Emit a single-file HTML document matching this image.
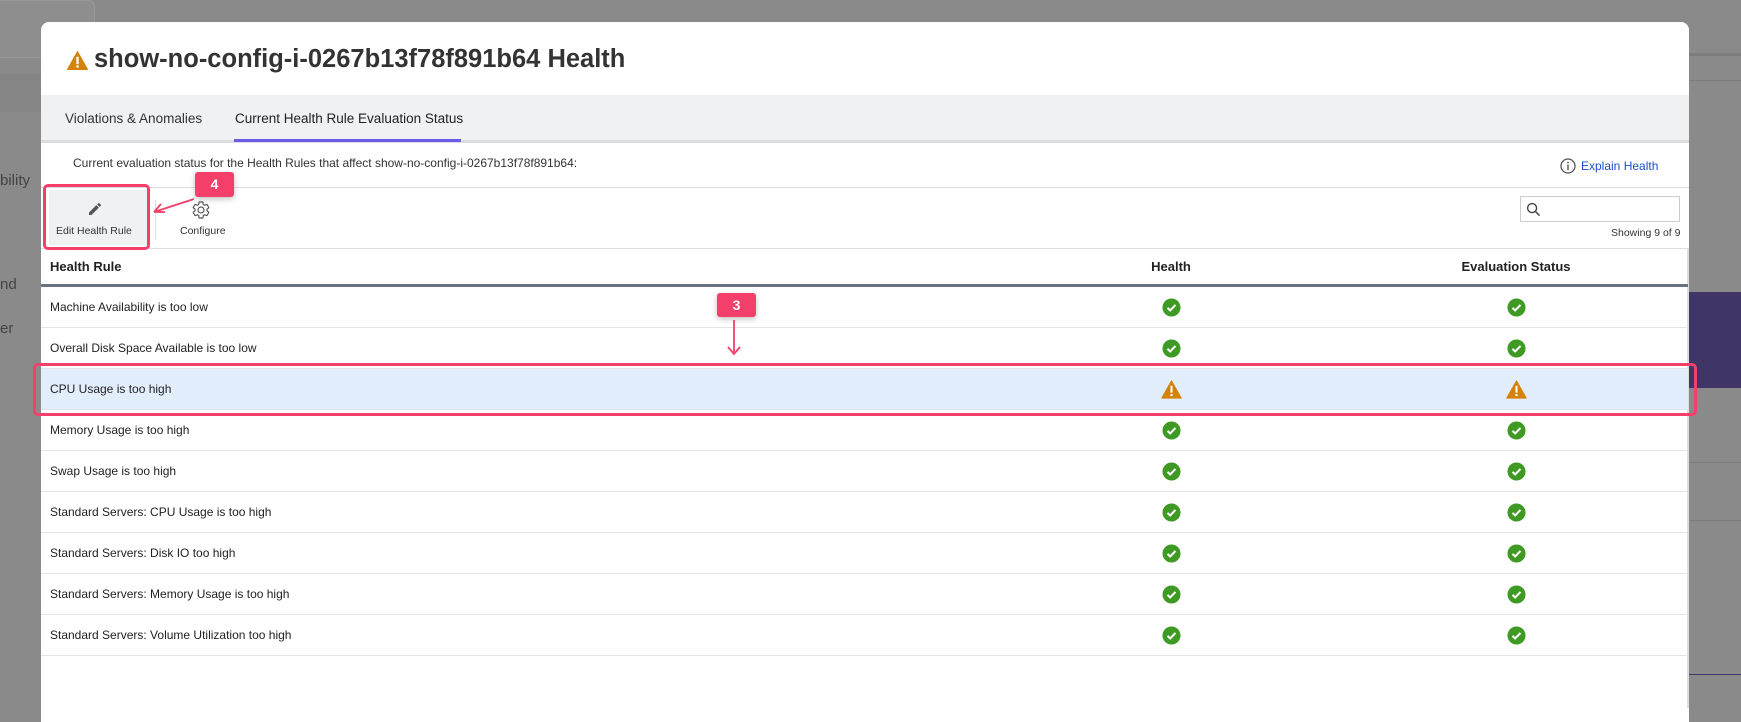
<!DOCTYPE html>
<html><head><meta charset="utf-8"><style>
*{box-sizing:border-box;margin:0;padding:0}
body{width:1741px;height:683px;overflow:hidden;background:#8a8a8a;font-family:"Liberation Sans",sans-serif;position:relative;color:#222}
.a{position:absolute}
.modal{left:41px;top:22px;width:1648px;height:700px;background:#fff;border-radius:8px 8px 0 0;overflow:hidden}
.t{position:absolute;white-space:nowrap}
.row{position:absolute;left:0;width:1647px;height:41px;border-bottom:1px solid #e2e5ea}
.row span{position:absolute;left:9px;top:13px;font-size:12px;color:#222}
.ic{position:absolute;top:11px}
.c1{left:1121px}.c2{left:1466px}
.badge{background:#f43f6a;color:#fff;font-weight:bold;font-size:14px;text-align:center;border-radius:3px;box-shadow:0 2px 6px rgba(0,0,0,.25)}
</style></head><body>
<div class="a" style="left:-5px;top:0;width:100px;height:58px;border:1px solid #999;border-radius:6px;background:#8e8e8e"></div>
<div class="a" style="left:0;top:74px;width:41px;height:38px;background:#858585"></div>
<div class="t" style="left:0;top:172px;font-size:15px;color:#444">bility</div>
<div class="t" style="left:0;top:276px;font-size:15px;color:#444">nd</div>
<div class="t" style="left:0;top:320px;font-size:15px;color:#444">er</div>
<div class="a" style="left:1689px;top:53px;width:52px;height:3px;background:#7c7c7c"></div>
<div class="a" style="left:1689px;top:80px;width:52px;height:1px;background:#7c7c7c"></div>
<div class="a" style="left:1689px;top:292px;width:52px;height:96px;background:#3f3566"></div>
<div class="a" style="left:1689px;top:462px;width:52px;height:1px;background:#7c7c7c"></div>
<div class="a" style="left:1689px;top:520px;width:52px;height:1px;background:#7c7c7c"></div>
<div class="a" style="left:1689px;top:674px;width:52px;height:1px;background:#3f3566"></div>

<div class="a modal">
  <svg class="a" style="left:26px;top:29px" width="21" height="19" viewBox="0 0 20 18"><path d="M10 0.5 L19.5 17.5 H0.5 Z" fill="#d4820b" stroke="#d4820b" stroke-linejoin="round"/><rect x="8.9" y="5.5" width="2.2" height="7" fill="#fff"/><rect x="8.9" y="13.6" width="2.2" height="2.2" fill="#fff"/></svg>
  <div class="t" style="left:53px;top:23px;font-size:25.5px;font-weight:bold;color:#333">show-no-config-i-0267b13f78f891b64 Health</div>
  <div class="a" style="left:0;top:73px;width:1648px;height:48px;background:#f0f1f3;border-bottom:3px solid #dcdde0"></div>
  <div class="t" style="left:24px;top:89px;font-size:13.5px;color:#333">Violations &amp; Anomalies</div>
  <div class="t" style="left:194px;top:89px;font-size:13.5px;color:#222">Current Health Rule Evaluation Status</div>
  <div class="a" style="left:193px;top:117px;width:227px;height:3px;background:#6b5ce7"></div>
  <div class="t" style="left:32px;top:134px;font-size:12px;color:#333">Current evaluation status for the Health Rules that affect show-no-config-i-0267b13f78f891b64:</div>
  <svg class="a" style="left:1519px;top:136px" width="16" height="16" viewBox="0 0 16 16"><circle cx="8" cy="8" r="7" fill="none" stroke="#555" stroke-width="1.3"/><rect x="7.3" y="6.5" width="1.4" height="5.5" fill="#555"/><circle cx="8" cy="4.5" r="0.9" fill="#555"/></svg>
  <div class="t" style="left:1540px;top:137px;font-size:12px;color:#1a4fc9">Explain Health</div>
  <div class="a" style="left:0;top:165px;width:1648px;height:1px;background:#dcdde0"></div>
  <div class="a" style="left:8px;top:168px;width:98px;height:55px;background:#f0f1f3"></div>
  <svg class="a" style="left:46px;top:179px" width="16" height="16" viewBox="0 0 24 24"><path d="M3 17.25V21h3.75L17.81 9.94l-3.75-3.75L3 17.25zM20.71 7.04a1 1 0 000-1.41l-2.34-2.34a1 1 0 00-1.41 0l-1.83 1.83 3.75 3.75 1.83-1.83z" fill="#555"/></svg>
  <div class="t" style="left:15px;top:203px;font-size:10.5px;color:#333">Edit Health Rule</div>
  <div class="a" style="left:114px;top:178px;width:1px;height:40px;background:#e0e0e0"></div>
  <svg class="a" style="left:150px;top:178px" width="20" height="20" viewBox="0 0 24 24"><path d="M19.14 12.94c.04-.3.06-.61.06-.94 0-.32-.02-.64-.07-.94l2.03-1.58a.49.49 0 00.12-.61l-1.92-3.32a.49.49 0 00-.59-.22l-2.39.96c-.5-.38-1.03-.7-1.62-.94l-.36-2.54a.48.48 0 00-.48-.41h-3.84a.48.48 0 00-.47.41l-.36 2.54c-.59.24-1.13.57-1.62.94l-2.39-.96a.48.48 0 00-.59.22L2.74 8.87a.47.47 0 00.12.61l2.03 1.58c-.05.3-.09.63-.09.94s.02.64.07.94l-2.03 1.58a.49.49 0 00-.12.61l1.92 3.32c.12.22.37.29.59.22l2.39-.96c.5.38 1.03.7 1.62.94l.36 2.54c.05.24.24.41.48.41h3.84c.24 0 .44-.17.47-.41l.36-2.54c.59-.24 1.13-.56 1.62-.94l2.39.96c.22.08.47 0 .59-.22l1.92-3.32a.47.47 0 00-.12-.61l-2.01-1.58zM12 15.6A3.6 3.6 0 1112 8.4a3.6 3.6 0 010 7.2z" fill="none" stroke="#555" stroke-width="1.4"/></svg>
  <div class="t" style="left:139px;top:203px;font-size:10.5px;color:#333">Configure</div>
  <div class="a" style="left:1479px;top:174px;width:160px;height:26px;border:1px solid #ccc"></div>
  <svg class="a" style="left:1485px;top:180px" width="15" height="15" viewBox="0 0 16 16"><circle cx="6.5" cy="6.5" r="4.8" fill="none" stroke="#444" stroke-width="1.5"/><path d="M10 10l4.5 4.5" stroke="#444" stroke-width="1.6"/></svg>
  <div class="t" style="left:1570px;top:205px;font-size:10.5px;color:#333;width:67px;text-align:right">Showing 9 of 9</div>
  <div class="a" style="left:0;top:226px;width:1648px;height:1px;background:#dcdde0"></div>
  <div class="a" style="left:1646px;top:226px;width:2px;height:460px;background:#ddd"></div>
  <div class="t" style="left:9px;top:237px;font-size:13px;font-weight:bold;color:#222">Health Rule</div>
  <div class="t" style="left:1110px;top:237px;font-size:13px;font-weight:bold;color:#222;width:40px;text-align:center">Health</div>
  <div class="t" style="left:1415px;top:237px;font-size:13px;font-weight:bold;color:#222;width:120px;text-align:center">Evaluation Status</div>
  <div class="a" style="left:0;top:262px;width:1647px;height:3px;background:#6b7280"></div>

  <div class="row" style="top:265px"><span>Machine Availability is too low</span><div class="ic c1"><svg width="19" height="19" viewBox="0 0 20 20"><circle cx="10" cy="10" r="9.5" fill="#3f9a24"/><path d="M5.8 10.4l2.8 2.7 5.6-5.8" fill="none" stroke="#fff" stroke-width="2.2"/></svg></div><div class="ic c2"><svg width="19" height="19" viewBox="0 0 20 20"><circle cx="10" cy="10" r="9.5" fill="#3f9a24"/><path d="M5.8 10.4l2.8 2.7 5.6-5.8" fill="none" stroke="#fff" stroke-width="2.2"/></svg></div></div>
  <div class="row" style="top:306px"><span>Overall Disk Space Available is too low</span><div class="ic c1"><svg width="19" height="19" viewBox="0 0 20 20"><circle cx="10" cy="10" r="9.5" fill="#3f9a24"/><path d="M5.8 10.4l2.8 2.7 5.6-5.8" fill="none" stroke="#fff" stroke-width="2.2"/></svg></div><div class="ic c2"><svg width="19" height="19" viewBox="0 0 20 20"><circle cx="10" cy="10" r="9.5" fill="#3f9a24"/><path d="M5.8 10.4l2.8 2.7 5.6-5.8" fill="none" stroke="#fff" stroke-width="2.2"/></svg></div></div>
  <div class="row" style="top:347px;background:#e3eefc"><span>CPU Usage is too high</span><div class="ic" style="left:1120px"><svg width="21" height="19" viewBox="0 0 20 18"><path d="M10 0.8 L19.3 17.2 H0.7 Z" fill="#d4820b" stroke="#d4820b" stroke-linejoin="round"/><rect x="9" y="5.5" width="2" height="6.5" fill="#fff"/><rect x="9" y="13.3" width="2" height="2" fill="#fff"/></svg></div><div class="ic" style="left:1465px"><svg width="21" height="19" viewBox="0 0 20 18"><path d="M10 0.8 L19.3 17.2 H0.7 Z" fill="#d4820b" stroke="#d4820b" stroke-linejoin="round"/><rect x="9" y="5.5" width="2" height="6.5" fill="#fff"/><rect x="9" y="13.3" width="2" height="2" fill="#fff"/></svg></div></div>
  <div class="row" style="top:388px"><span>Memory Usage is too high</span><div class="ic c1"><svg width="19" height="19" viewBox="0 0 20 20"><circle cx="10" cy="10" r="9.5" fill="#3f9a24"/><path d="M5.8 10.4l2.8 2.7 5.6-5.8" fill="none" stroke="#fff" stroke-width="2.2"/></svg></div><div class="ic c2"><svg width="19" height="19" viewBox="0 0 20 20"><circle cx="10" cy="10" r="9.5" fill="#3f9a24"/><path d="M5.8 10.4l2.8 2.7 5.6-5.8" fill="none" stroke="#fff" stroke-width="2.2"/></svg></div></div>
  <div class="row" style="top:429px"><span>Swap Usage is too high</span><div class="ic c1"><svg width="19" height="19" viewBox="0 0 20 20"><circle cx="10" cy="10" r="9.5" fill="#3f9a24"/><path d="M5.8 10.4l2.8 2.7 5.6-5.8" fill="none" stroke="#fff" stroke-width="2.2"/></svg></div><div class="ic c2"><svg width="19" height="19" viewBox="0 0 20 20"><circle cx="10" cy="10" r="9.5" fill="#3f9a24"/><path d="M5.8 10.4l2.8 2.7 5.6-5.8" fill="none" stroke="#fff" stroke-width="2.2"/></svg></div></div>
  <div class="row" style="top:470px"><span>Standard Servers: CPU Usage is too high</span><div class="ic c1"><svg width="19" height="19" viewBox="0 0 20 20"><circle cx="10" cy="10" r="9.5" fill="#3f9a24"/><path d="M5.8 10.4l2.8 2.7 5.6-5.8" fill="none" stroke="#fff" stroke-width="2.2"/></svg></div><div class="ic c2"><svg width="19" height="19" viewBox="0 0 20 20"><circle cx="10" cy="10" r="9.5" fill="#3f9a24"/><path d="M5.8 10.4l2.8 2.7 5.6-5.8" fill="none" stroke="#fff" stroke-width="2.2"/></svg></div></div>
  <div class="row" style="top:511px"><span>Standard Servers: Disk IO too high</span><div class="ic c1"><svg width="19" height="19" viewBox="0 0 20 20"><circle cx="10" cy="10" r="9.5" fill="#3f9a24"/><path d="M5.8 10.4l2.8 2.7 5.6-5.8" fill="none" stroke="#fff" stroke-width="2.2"/></svg></div><div class="ic c2"><svg width="19" height="19" viewBox="0 0 20 20"><circle cx="10" cy="10" r="9.5" fill="#3f9a24"/><path d="M5.8 10.4l2.8 2.7 5.6-5.8" fill="none" stroke="#fff" stroke-width="2.2"/></svg></div></div>
  <div class="row" style="top:552px"><span>Standard Servers: Memory Usage is too high</span><div class="ic c1"><svg width="19" height="19" viewBox="0 0 20 20"><circle cx="10" cy="10" r="9.5" fill="#3f9a24"/><path d="M5.8 10.4l2.8 2.7 5.6-5.8" fill="none" stroke="#fff" stroke-width="2.2"/></svg></div><div class="ic c2"><svg width="19" height="19" viewBox="0 0 20 20"><circle cx="10" cy="10" r="9.5" fill="#3f9a24"/><path d="M5.8 10.4l2.8 2.7 5.6-5.8" fill="none" stroke="#fff" stroke-width="2.2"/></svg></div></div>
  <div class="row" style="top:593px"><span>Standard Servers: Volume Utilization too high</span><div class="ic c1"><svg width="19" height="19" viewBox="0 0 20 20"><circle cx="10" cy="10" r="9.5" fill="#3f9a24"/><path d="M5.8 10.4l2.8 2.7 5.6-5.8" fill="none" stroke="#fff" stroke-width="2.2"/></svg></div><div class="ic c2"><svg width="19" height="19" viewBox="0 0 20 20"><circle cx="10" cy="10" r="9.5" fill="#3f9a24"/><path d="M5.8 10.4l2.8 2.7 5.6-5.8" fill="none" stroke="#fff" stroke-width="2.2"/></svg></div></div>
</div>

<div class="a" style="left:43px;top:184px;width:107px;height:66px;border:3px solid #f43f6a;border-radius:5px"></div>
<div class="a badge" style="left:195px;top:172px;width:39px;height:25px;line-height:25px">4</div>
<svg class="a" style="left:148px;top:196px" width="50" height="20"><path d="M46 3L6 16M6 16l11 0M6 16l7-8" fill="none" stroke="#f43f6a" stroke-width="1.8"/></svg>
<div class="a" style="left:33px;top:363px;width:1664px;height:53px;border:3px solid #f43f6a;border-radius:5px"></div>
<div class="a badge" style="left:717px;top:293px;width:39px;height:24px;line-height:24px">3</div>
<svg class="a" style="left:725px;top:318px" width="18" height="40"><path d="M9 2V36M3 29l6 7 6-7" fill="none" stroke="#f43f6a" stroke-width="1.8"/></svg>
</body></html>
